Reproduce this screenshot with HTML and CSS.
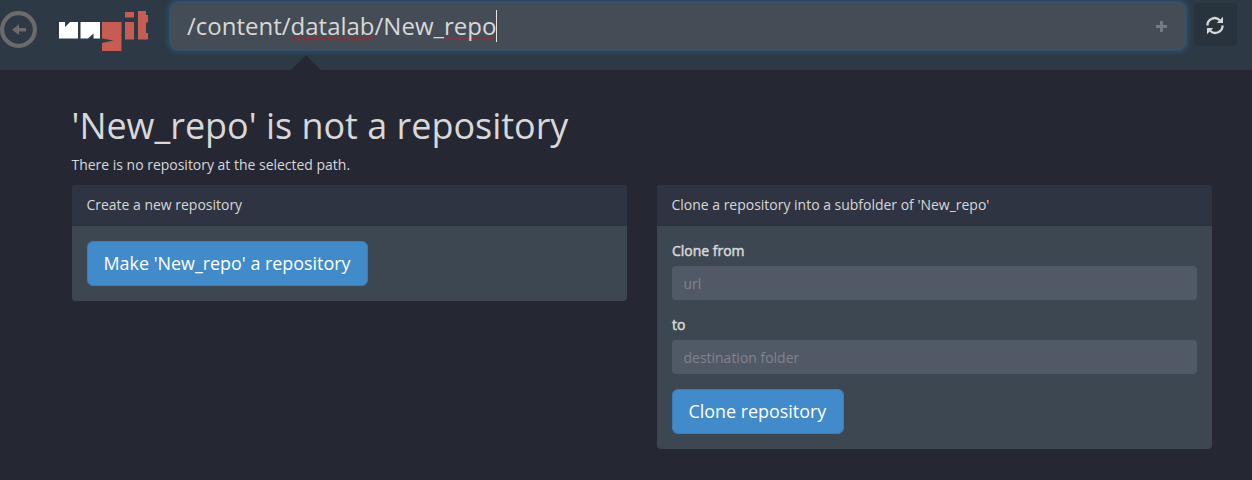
FILE: index.html
```
<!DOCTYPE html>
<html lang="en">
<head>
<meta charset="utf-8">
<title>ungit</title>
<link rel="stylesheet" href="styles.css">
</head>
<body>
<header class="navbar">
  <a class="back" aria-label="Back">
    <svg width="37" height="40" viewBox="0 0 37 40"><circle cx="18.5" cy="19.5" r="16.4" fill="none" stroke="#6b6b6b" stroke-width="4.2"/><path d="M12 19.7 19 14.3V18H26V21.4H19V25.1Z" fill="#6b6b6b"/></svg>
  </a>
  <a class="logo" aria-label="ungit">
    <svg width="90" height="41" viewBox="0 0 90 41">
      <path d="M0 12H6V17L11 12H19V28.5H0ZM21.5 12H41V28.5H34.5V23.5L29 28.5H21.5Z" fill="#fff"/>
      <path d="M43 12H62.5V41H43V33L54.5 30.5 43 28.5ZM66 2H75V7.5H66ZM66 12H75V29.5H66ZM79 1H87V5H89V12.500H87V23H89V29.500H79Z" fill="#c75c52"/>
    </svg>
  </a>
  <div class="path">
    <span class="path-text">/content/<span class="misspelled">datalab</span>/New_<span class="misspelled">repo</span></span><i class="caret"></i>
    <svg class="plus" width="11" height="11" viewBox="0 0 11 11"><path d="M4 0H7V4H11V7H7V11H4V7H0V4H4Z" fill="#747b80"/></svg>
  </div>
  <button class="refresh" aria-label="Refresh">
    <svg width="18" height="19" viewBox="0 0 18 19"><g fill="none" stroke="#d8d8d8" stroke-width="2.3"><path d="M1.400 9.500A7.300 7.300 0 0 1 13.800 4.200"/><path d="M16.600 9.500A7.300 7.300 0 0 1 4.200 14.800"/></g><path d="M17 .8V7H10.800ZM1 18.200V12H7.200Z" fill="#d8d8d8"/></svg>
  </button>
  <i class="notch"></i>
</header>
<main class="content">
  <h1>'New_repo' is not a repository</h1>
  <p>There is no repository at the selected path.</p>
  <div class="row">
    <section class="panel">
      <div class="panel-heading">Create a new repository</div>
      <div class="panel-body"><button class="btn">Make 'New_repo' a repository</button></div>
    </section>
    <section class="panel">
      <div class="panel-heading">Clone a repository into a subfolder of 'New_repo'</div>
      <div class="panel-body">
        <label for="from">Clone from</label>
        <input id="from" placeholder="url">
        <label for="to">to</label>
        <input id="to" placeholder="destination folder">
        <button class="btn">Clone repository</button>
      </div>
    </section>
  </div>
</main>
</body>
</html>
```
FILE: styles.css
```
* { box-sizing: border-box; }
body {
  margin: 0;
  height: 480px;
  overflow: hidden;
  background: #252833;
  color: #d8d8d8;
  font: 13.98px/20px "Open Sans", "Noto Sans", sans-serif;
}
svg { display: block; }
.navbar {
  position: relative;
  display: flex;
  align-items: flex-start;
  height: 70px;
  background: #2d3945;
}
.back { width: 59px; padding-top: 10px; }
.logo { width: 111px; padding-top: 10px; }
.path {
  display: flex;
  align-items: center;
  width: 1016px;
  height: 48px;
  margin-top: 2px;
  padding: 0 18px 0 16px;
  border: 1px solid #3a526a;
  border-radius: 7px;
  background: #444d56;
  box-shadow: 0 0 7px #336590;
}
.path-text { font-size: 24px; line-height: 34px; white-space: nowrap; }
.misspelled {
  text-decoration: spelling-error;
  text-decoration-skip-ink: none;
}
.caret { width: 1px; height: 32px; background: #e4e4e4; }
.plus { margin-left: auto; }
.refresh {
  display: flex;
  justify-content: center;
  align-items: center;
  width: 43px;
  height: 43px;
  margin: 3px 0 0 8px;
  padding: 1px 2px 0 0;
  border: 0;
  border-radius: 4px;
  background: #29333e;
}
.notch {
  position: absolute;
  left: 291px;
  bottom: 0;
  border: solid transparent;
  border-width: 0 15px 15px;
  border-bottom-color: #252833;
}
.content { padding: 36px 40px 0 72px; }
h1 { margin: 0 0 10px -0.5px; font-size: 35.95px; font-weight: 400; line-height: 39px; }
p { margin: 0 0 10px -0.5px; }
.row { display: grid; grid-template-columns: 1fr 1fr; gap: 30px; align-items: start; }
.panel { overflow: hidden; border-radius: 4px; background: #3d4752; }
.panel-heading {
  height: 41px;
  padding: 10px 14.5px;
  border-bottom: 1px solid #2b303b;
  background: #2e3441;
}
.panel-body { padding: 15px; }
label {
  display: block;
  margin-bottom: 5px;
  -webkit-text-stroke: 0.5px currentColor;
}
input {
  display: block;
  width: 100%;
  height: 34px;
  margin-bottom: 15px;
  padding: 6px 11.5px;
  border: 0;
  border-radius: 4px;
  background: #525966;
  color: #d8d8d8;
  font: inherit;
}
input::placeholder { color: #80848c; }
.btn {
  display: block;
  height: 45px;
  padding: 0 16.5px 2px 15.5px;
  border: 1px solid #387dbc;
  border-radius: 6px;
  background: #428bca;
  color: #fff;
  font: 17.9px/24px "Open Sans", "Noto Sans", sans-serif;
}
```
